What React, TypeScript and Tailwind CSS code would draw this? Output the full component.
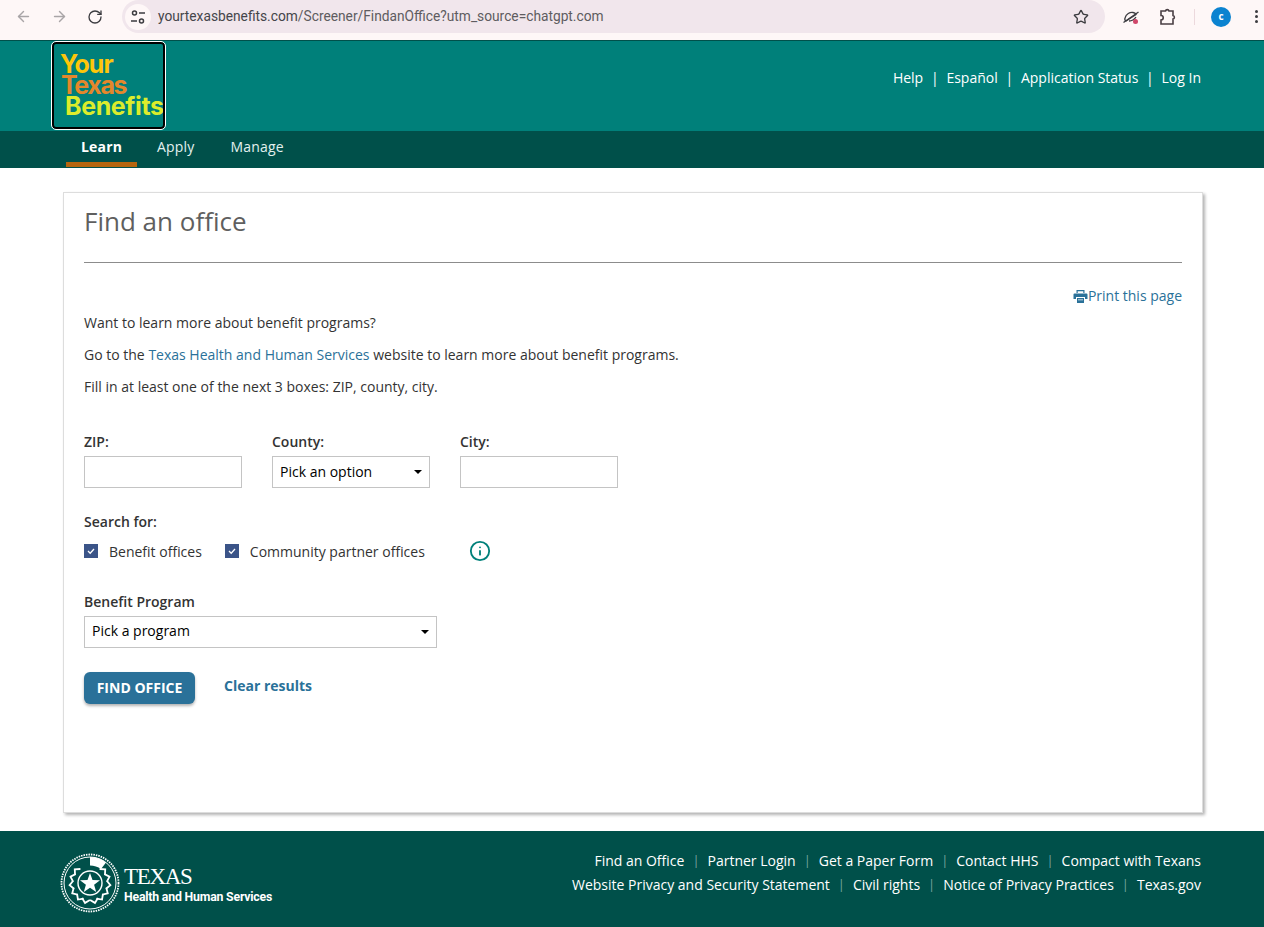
import React from 'react';
import { ArrowLeft, ArrowRight, RotateCw, Star, Info } from 'lucide-react';

const headerLinks = ['Help', 'Español', 'Application Status', 'Log In'];
const footerTop = ['Find an Office', 'Partner Login', 'Get a Paper Form', 'Contact HHS', 'Compact with Texans'];
const footerBottom = ['Website Privacy and Security Statement', 'Civil rights', 'Notice of Privacy Practices', 'Texas.gov'];

const SiteControls = () => (
  <svg width="16" height="16" viewBox="0 0 16 16" fill="none" stroke="#3c3c40" strokeWidth="1.5">
    <circle cx="4.5" cy="4" r="2" />
    <path d="M9 4h6M1 12h6" />
    <circle cx="11.5" cy="12" r="2" />
  </svg>
);

const Caret = () => <span className="h-0 w-0 border-x-[4px] border-t-[4px] border-x-transparent border-t-black" />;

const CheckBox = () => (
  <span className="flex h-[14px] w-[14px] items-center justify-center bg-[#3b5488]">
    <svg width="10" height="10" viewBox="0 0 10 10" fill="none" stroke="#ffffff" strokeWidth="1.3">
      <path d="M2 5l2.2 2.2L8 3" />
    </svg>
  </span>
);

const Seal = () => {
  // laurel wreath, open at the top
  const angles = [48, 72, 96, 120, 144, 166];
  return (
    <svg width="60" height="60" viewBox="0 0 60 60" fill="none">
      <circle cx="30" cy="30" r="28.5" stroke="#ffffff" strokeWidth="1.8" strokeDasharray="1.5 1" />
      <circle cx="30" cy="30" r="26" stroke="#ffffff" strokeWidth="1" />
      <path d="M30 4a26 26 0 0 1 16 5.500L41 16c-3-2-7-3.500-11-3.500z" fill="#ffffff" />
      {angles.map(a => (
        <g key={a} stroke="#ffffff" strokeWidth="1.8">
          <path d="M26 13.500L30 9.500l4 4" transform={`rotate(${a} 30 30)`} />
          <path d="M26 13.500L30 9.500l4 4" transform={`rotate(${-a} 30 30)`} />
        </g>
      ))}
      <circle cx="30" cy="30" r="12" stroke="#ffffff" strokeWidth="1.4" fill="#00504a" />
      <path d="M30 20l2.500 7 7.500.2-5.900 4.600 2.100 7.200-6.200-4.300-6.200 4.300 2.100-7.200-5.900-4.600 7.500-.2z" fill="#ffffff" />
    </svg>
  );
};

const PrintIcon = () => (
  <svg width="15" height="15" viewBox="0 0 15 15" fill="#2a7199">
    <path d="M3.5 1h8v3h-1.2V2.200H4.700V4H3.500z" />
    <path d="M1.500 4.500h12a1 1 0 0 1 1 1V10h-2.500V8H3v2H.5V5.500a1 1 0 0 1 1-1z" />
    <path d="M4 9h7v5H4zM5 10.500v.8h5v-.8z" fillRule="evenodd" />
  </svg>
);

const Sep = ({ dim }: { dim?: boolean }) => (
  <span className={dim ? 'mx-[8.25px] text-[12px] text-[#7fa8a4]' : 'mx-[7.75px] text-white'}>|</span>
);

export default function App() {
  return (
    <div className="h-[927px] w-[1264px] overflow-hidden bg-white font-['Open_Sans',sans-serif] text-[14px] text-[#333333]">
      {/* browser bar */}
      <div className="flex h-[40px] items-start bg-[#fef7f7] pl-[15px]">
        <div className="flex h-[33px] items-center gap-[19px]">
          <ArrowLeft size={17} className="text-[#a9a5a7]" />
          <ArrowRight size={17} className="text-[#a9a5a7]" />
          <RotateCw size={16} className="text-[#3c3c40]" />
        </div>
        <div className="ml-[19px] flex h-[33px] w-[983px] items-center rounded-[17px] bg-[#f1e6ec] pl-[3px] pr-[16px]">
          <span className="flex h-[26px] w-[26px] items-center justify-center rounded-full bg-[#fef7f7]">
            <SiteControls />
          </span>
          <span className="ml-[7px] font-['Roboto',sans-serif] text-[13.75px] text-[#45454a]">
            yourtexasbenefits.com<span className="text-[#5e5c60]">/Screener/FindanOffice?utm_source=chatgpt.com</span>
          </span>
          <Star size={16} className="ml-auto text-[#3c3c40]" />
        </div>
        <div className="flex h-[33px] items-center">
          <svg className="ml-[17px]" width="18" height="18" viewBox="0 0 18 18" fill="none" stroke="#3c3c40" strokeWidth="1.300">
            <path d="M3 10c1-4 5-6 8-5.500 1.500.3 2.500 1 3 2L4 13c-1-.5-1.500-1.500-1-3z" />
            <path d="M1.500 14.500L16.500 4" />
            <path d="M7 13c3 0 5-1 7-4" />
            <circle cx="13.500" cy="13.500" r="2.500" fill="#d0466a" stroke="none" />
          </svg>
          <svg className="ml-[18px]" width="18" height="18" viewBox="0 0 18 18" fill="none" stroke="#4a3f44" strokeWidth="1.600">
            <path d="M3 3h4.500a1.800 1.800 0 0 1 3.500 0H15v4.500a1.800 1.800 0 0 1 0 3.500V16H3v-4a2.200 2.200 0 0 0 0-4.500z" />
          </svg>
          <span className="ml-[18px] h-[16px] w-px bg-[#ecd9dd]" />
          <span className="ml-[16px] flex h-[20px] w-[20px] items-center justify-center rounded-full bg-[#0b83d0] text-[10px] font-bold text-white">c</span>
          <span className="ml-[24px] flex flex-col gap-[2px]">
            <i className="h-[3px] w-[3px] rounded-full bg-[#3c3c40]" />
            <i className="h-[3px] w-[3px] rounded-full bg-[#3c3c40]" />
            <i className="h-[3px] w-[3px] rounded-full bg-[#3c3c40]" />
          </span>
        </div>
      </div>

      {/* header */}
      <div className="flex h-[91px] items-start justify-between border-t border-[#00504a] bg-[#00807a] pl-[52px] pr-[63px]">
        <div className="mt-px h-[87px] w-[113px] overflow-hidden rounded-[4px] border-2 border-black bg-[#00807a] pl-[6px] pt-[10px] outline outline-1 outline-white font-['Inter',sans-serif] text-[25px] font-bold leading-[21px] tracking-[-1px]">
          <div className="text-[#fdc60a]">Your</div>
          <div className="ml-px tracking-[-1.4px] text-[#e5872b]">Texas</div>
          <div className="ml-[5px] whitespace-nowrap tracking-[-0.4px] text-[#dcec2c]">Benefits</div>
        </div>
        <div className="mt-[26px] flex items-center text-[14px] leading-[22px] text-white">
          {headerLinks.map((l, i) => (
            <React.Fragment key={l}>
              {i > 0 && <Sep />}
              <span>{l}</span>
            </React.Fragment>
          ))}
        </div>
      </div>

      {/* nav */}
      <div className="flex h-[37px] bg-[#00504a] pl-[66px] text-[14px] tracking-[0.2px] text-[#e3f1ef]">
        <div className="flex h-[36px] w-[71px] items-center justify-center border-b-[5px] border-[#b5650f] font-bold text-white">Learn</div>
        <div className="ml-[20px] pt-[5px]">Apply</div>
        <div className="ml-[36px] pt-[5px]">Manage</div>
      </div>

      {/* card */}
      <div className="ml-[63px] mt-[24px] h-[621px] w-[1140px] border border-[#dddddd] px-[20px] shadow-[2px_2px_3px_rgba(0,0,0,0.3)]">
        <h1 className="mt-[10px] text-[26px] leading-[36px] text-[#5f5f5f]">Find an office</h1>
        <div className="mt-[23px] border-t border-[#8c8c8c]" />
        <div className="mt-[23px] flex items-center justify-end text-[#2a7199]">
          <PrintIcon />
          <span className="leading-[20px]">Print this page</span>
        </div>
        <p className="mt-[7px] leading-[20px]">Want to learn more about benefit programs?</p>
        <p className="mt-[12px] leading-[20px]">
          Go to the <span className="text-[#2a7199]">Texas Health and Human Services</span> website to learn more about benefit programs.
        </p>
        <p className="mt-[12px] leading-[20px]">Fill in at least one of the next 3 boxes: ZIP, county, city.</p>

        <div className="mt-[35px] flex gap-[30px]">
          <div className="w-[158px]">
            <div className="font-semibold leading-[20px]">ZIP:</div>
            <div className="mt-[4px] h-[32px] border border-[#c4c4c4]" />
          </div>
          <div className="w-[158px]">
            <div className="font-semibold leading-[20px]">County:</div>
            <div className="mt-[4px] flex h-[32px] items-center justify-between border border-[#c4c4c4] pl-[7px] pr-[7px] text-black">
              <span className="pb-[2px]">Pick an option</span>
              <Caret />
            </div>
          </div>
          <div className="w-[158px]">
            <div className="font-semibold leading-[20px]">City:</div>
            <div className="mt-[4px] h-[32px] border border-[#c4c4c4]" />
          </div>
        </div>

        <div className="mt-[24px] font-semibold leading-[20px]">Search for:</div>
        <div className="mt-[9px] flex h-[20px] items-center">
          <CheckBox />
          <span className="ml-[11px]">Benefit offices</span>
          <span className="ml-[23px]"><CheckBox /></span>
          <span className="ml-[11px]">Community partner offices</span>
          <Info size={22} strokeWidth={2} className="ml-[44px] text-[#00807a]" />
        </div>

        <div className="mt-[31px] font-semibold leading-[20px]">Benefit Program</div>
        <div className="mt-[4px] flex h-[32px] w-[353px] items-center justify-between border border-[#c4c4c4] pl-[7px] pr-[7px] text-black">
          <span className="pb-[4px]">Pick a program</span>
          <Caret />
        </div>

        <div className="mt-[24px] flex items-start">
          <button className="h-[32px] w-[111px] rounded-[6px] bg-[#2a7199] pb-[2px] text-[14px] font-bold text-white shadow-[0_2px_3px_rgba(0,0,0,0.3)]">FIND OFFICE</button>
          <span className="ml-[29px] mt-[4px] font-bold leading-[20px] text-[#2a7199]">Clear results</span>
        </div>
      </div>

      {/* footer */}
      <div className="mt-[18px] flex h-[96px] justify-between bg-[#00504a] pl-[60px] pr-[63px] text-white">
        <div className="mt-[22px] flex items-start">
          <Seal />
          <div className="ml-[4px] mt-[10px]">
            <div className="font-['Liberation_Serif',serif] text-[23px] leading-[27px] tracking-[-1.3px]">TEXAS</div>
            <div className="font-['Roboto',sans-serif] text-[12.3px] font-bold leading-[14px] tracking-[-0.2px]">Health and Human Services</div>
          </div>
        </div>
        <div className="mt-[18px] flex flex-col items-end text-[14px] leading-[24px]">
          <div className="flex items-center">
            {footerTop.map((l, i) => (
              <React.Fragment key={l}>
                {i > 0 && <Sep dim />}
                <span>{l}</span>
              </React.Fragment>
            ))}
          </div>
          <div className="flex items-center">
            {footerBottom.map((l, i) => (
              <React.Fragment key={l}>
                {i > 0 && <Sep dim />}
                <span>{l}</span>
              </React.Fragment>
            ))}
          </div>
        </div>
      </div>
    </div>
  );
}
